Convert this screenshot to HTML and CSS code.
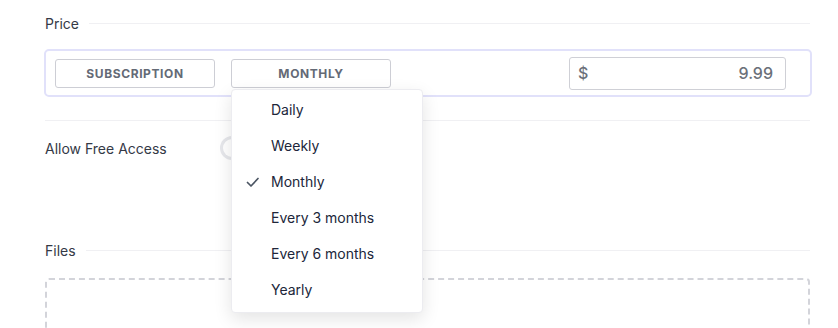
FILE: index.html
```html
<!DOCTYPE html>
<html>
<head>
<meta charset="utf-8">
<link rel="stylesheet" href="styles.css">
</head>
<body>
<div class="page">
  <div class="section-head">
    <span class="section-title">Price</span>
    <span class="section-line"></span>
  </div>

  <div class="price-box">
    <button class="btn">SUBSCRIPTION</button>
    <div class="dd">
      <button class="btn">MONTHLY</button>
      <ul class="menu">
        <li class="item"><span class="check"></span>Daily</li>
        <li class="item"><span class="check"></span>Weekly</li>
        <li class="item"><span class="check"><svg width="16" height="16" viewBox="0 0 16 16"><path d="M2.5 8.5l3.5 3.5l7-7.5" fill="none" stroke="#4b5563" stroke-width="1.7" stroke-linecap="round" stroke-linejoin="round"/></svg></span>Monthly</li>
        <li class="item"><span class="check"></span>Every 3 months</li>
        <li class="item"><span class="check"></span>Every 6 months</li>
        <li class="item"><span class="check"></span>Yearly</li>
      </ul>
    </div>
    <div class="price-input">
      <span class="cur">$</span>
      <span class="amount">9.99</span>
    </div>
  </div>

  <div class="divider"></div>

  <div class="row">
    <span class="row-label">Allow Free Access</span>
    <span class="toggle"><span class="knob"></span></span>
  </div>

  <div class="section-head files-head">
    <span class="section-title">Files</span>
    <span class="section-line"></span>
  </div>

  <div class="dropzone"></div>
</div>
</body>
</html>
```

FILE: styles.css
```css
* { box-sizing: border-box; }
html, body { margin: 0; padding: 0; background: #fff; }
body {
  font-family: Inter, "Noto Sans", sans-serif;
  color: #374151;
  width: 838px;
  height: 328px;
  overflow: hidden;
}
.page {
  width: 768px;
  margin-left: 44px;
  display: flex;
  flex-direction: column;
}
.section-head {
  display: flex;
  align-items: center;
  height: 20px;
  margin-top: 13px;
  padding-left: 1px;
  padding-right: 2px;
  gap: 10px;
}
.section-title {
  font-size: 14px;
  color: #343946;
}
.section-line {
  flex: 1;
  height: 1px;
  background: #f0f0f3;
}
.price-box {
  margin-top: 16px;
  height: 48px;
  border: 2px solid #e1e1fa;
  border-radius: 5px;
  display: flex;
  align-items: center;
  padding: 0 24px 0 9px;
  gap: 16px;
}
.btn {
  width: 160px;
  height: 29px;
  margin: 0;
  padding: 0;
  background: #fff;
  border: 1px solid #cdced5;
  border-radius: 3px;
  font-family: Inter, "Noto Sans", sans-serif;
  font-size: 12px;
  font-weight: 700;
  letter-spacing: 0.6px;
  color: #646a76;
}
.dd {
  position: relative;
  height: 29px;
}
.menu {
  position: absolute;
  top: 30px;
  left: 0;
  width: 192px;
  margin: 0;
  padding: 2px 0 4px;
  list-style: none;
  background: #fff;
  border: 1px solid #ececf0;
  border-radius: 4px;
  box-shadow: 0 6px 18px rgba(0, 0, 0, 0.11);
  z-index: 5;
}
.item {
  height: 36px;
  display: flex;
  align-items: center;
  font-size: 14px;
  color: #20263a;
  padding-left: 13px;
}
.check {
  width: 16px;
  height: 16px;
  margin-right: 10px;
  display: flex;
}
.price-input {
  margin-left: auto;
  width: 217px;
  height: 33px;
  border: 1px solid #cfd0d6;
  border-radius: 3px;
  display: flex;
  align-items: center;
  justify-content: space-between;
  padding: 0 12px 0 8px;
  font-size: 16px;
  font-weight: 500;
  color: #6b7079;
}
.divider {
  margin-top: 23px;
  height: 1px;
  background: #f0f0f3;
  margin-left: 1px;
  margin-right: 2px;
}
.row {
  margin-top: 15px;
  height: 24px;
  display: flex;
  align-items: center;
  padding-left: 1px;
}
.row-label {
  width: 175px;
  font-size: 14px;
  color: #343946;
}
.toggle {
  width: 44px;
  height: 24px;
  border-radius: 12px;
  background: #e6e7eb;
  display: flex;
  align-items: center;
  padding-left: 3px;
}
.knob {
  width: 18px;
  height: 18px;
  border-radius: 50%;
  background: #fff;
}
.files-head {
  margin-top: 80px;
}
.dropzone {
  margin-top: 18px;
  margin-left: 1px;
  margin-right: 2px;
  height: 120px;
  border: 2px dashed #d3d4da;
  border-radius: 4px;
}
```
